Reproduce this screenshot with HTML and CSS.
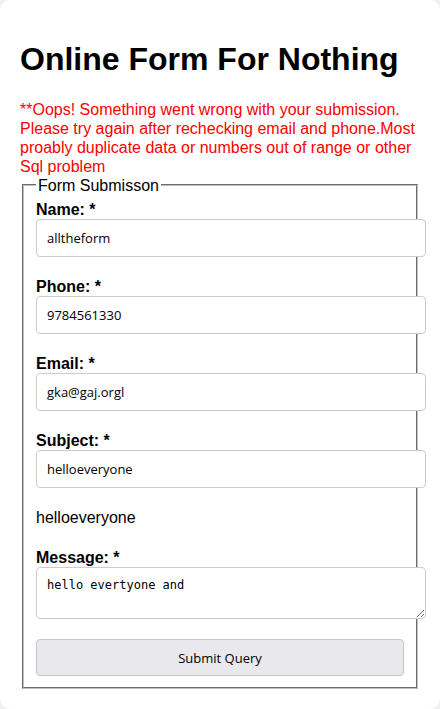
FILE: index.html
```html
<!DOCTYPE html>
<html lang="en">
<head>
<meta charset="utf-8">
<title>Online Form For Nothing</title>
<link rel="stylesheet" href="styles.css">
</head>
<body>
<div class="card">
  <h1 class="title">Online Form For Nothing</h1>
  <p class="error">**Oops! Something went wrong with your submission. Please try again after rechecking email and phone.Most proably duplicate data or numbers out of range or other Sql problem</p>
  <form class="form">
    <fieldset class="box">
      <legend class="legend">Form Submisson</legend>
      <div class="field">
        <label class="label">Name: *</label>
        <input class="input" type="text" value="alltheform">
      </div>
      <div class="field">
        <label class="label">Phone: *</label>
        <input class="input" type="text" value="9784561330">
      </div>
      <div class="field">
        <label class="label">Email: *</label>
        <input class="input" type="text" value="gka@gaj.orgl">
      </div>
      <div class="field">
        <label class="label">Subject: *</label>
        <input class="input" type="text" value="helloeveryone">
      </div>
      <p class="echo">helloeveryone</p>
      <div class="field">
        <label class="label">Message: *</label>
        <textarea class="textarea">hello evertyone and</textarea>
      </div>
      <button class="submit" type="button">Submit Query</button>
    </fieldset>
  </form>
</div>
</body>
</html>
```

FILE: styles.css
```css
html, body {
  margin: 0;
  padding: 0;
}
body {
  background: #f0f0f0;
  font-family: "Liberation Sans", Arial, sans-serif;
  font-size: 16px;
  line-height: 1.2;
  color: #000;
}
.card {
  background: #fff;
  border-radius: 10px;
  padding: 20px;
}
.title {
  font-size: 32px;
  line-height: normal;
  font-weight: bold;
  margin: 21.44px 0;
}
.error {
  color: #ff0000;
  line-height: 19px;
  margin: 0;
}
.form {
  margin: 0;
}
.box {
  margin: 0 2px;
  padding: 4.6px 12px 11px;
  border: 2px groove #c0c0c0;
}
.legend {
  padding: 0 2px;
}
.field {
  margin-bottom: 20px;
}
.label {
  display: block;
  font-weight: bold;
}
.input {
  display: block;
  width: 100%;
  height: 16px;
  margin: 0;
  padding: 10px;
  border: 1px solid #ccc;
  border-radius: 4px;
  font-family: "Open Sans", sans-serif;
  font-size: 13px;
  color: #000;
  background: #fff;
}
.echo {
  margin: 0 0 20px;
}
.textarea {
  display: block;
  width: 100%;
  height: 30.4px;
  margin: 0;
  padding: 10px;
  border: 1px solid #ccc;
  border-radius: 4px;
  font-family: "DejaVu Sans Mono", monospace;
  font-size: 12px;
  color: #000;
}
.submit {
  display: block;
  width: 100%;
  height: 37.3px;
  margin: 0;
  border: 1px solid #c8c8cc;
  border-radius: 4px;
  background: #e9e9ed;
  font-family: "Open Sans", sans-serif;
  font-size: 13px;
  color: #000;
}
```
